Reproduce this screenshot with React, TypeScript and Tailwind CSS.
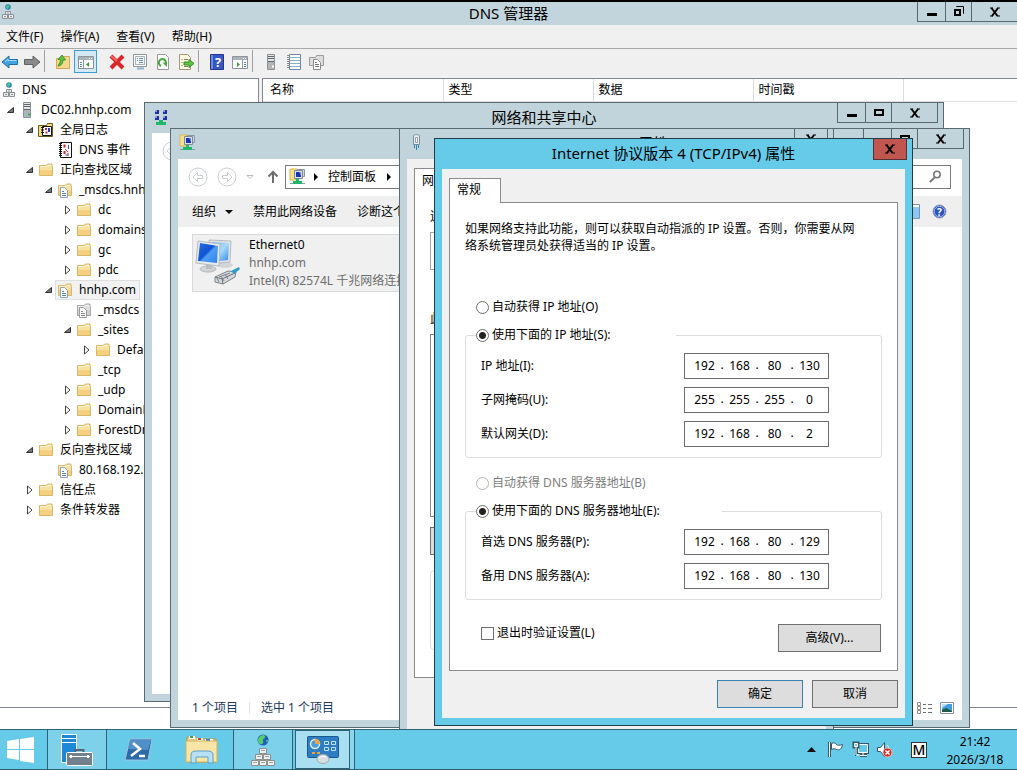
import type { ReactNode } from "react";
import clsx from "clsx";

type NodeIcon = "server" | "log" | "events" | "folder" | "zone" | "grayzone";

interface TreeItem {
  label: string;
  icon: NodeIcon;
  state?: "open" | "closed";
  selected?: boolean;
  children?: TreeItem[];
}

const TREE: TreeItem[] = [
  {
    label: "DC02.hnhp.com",
    icon: "server",
    state: "open",
    children: [
      {
        label: "全局日志",
        icon: "log",
        state: "open",
        children: [{ label: "DNS 事件", icon: "events" }],
      },
      {
        label: "正向查找区域",
        icon: "folder",
        state: "open",
        children: [
          {
            label: "_msdcs.hnhp.com",
            icon: "zone",
            state: "open",
            children: [
              { label: "dc", icon: "folder", state: "closed" },
              { label: "domains", icon: "folder", state: "closed" },
              { label: "gc", icon: "folder", state: "closed" },
              { label: "pdc", icon: "folder", state: "closed" },
            ],
          },
          {
            label: "hnhp.com",
            icon: "zone",
            state: "open",
            selected: true,
            children: [
              { label: "_msdcs", icon: "grayzone" },
              {
                label: "_sites",
                icon: "folder",
                state: "open",
                children: [
                  { label: "Default-First-Site-Name", icon: "folder", state: "closed" },
                ],
              },
              { label: "_tcp", icon: "folder" },
              { label: "_udp", icon: "folder", state: "closed" },
              { label: "DomainDnsZones", icon: "folder", state: "closed" },
              { label: "ForestDnsZones", icon: "folder", state: "closed" },
            ],
          },
        ],
      },
      {
        label: "反向查找区域",
        icon: "folder",
        state: "open",
        children: [{ label: "80.168.192.in-addr.arpa", icon: "zone" }],
      },
      { label: "信任点", icon: "folder", state: "closed" },
      { label: "条件转发器", icon: "folder", state: "closed" },
    ],
  },
];

const MENUS = ["文件(F)", "操作(A)", "查看(V)", "帮助(H)"];

const IP_FIELDS = [
  { id: "ip", label: "IP 地址(I):", value: "192.168.80.130" },
  { id: "mask", label: "子网掩码(U):", value: "255.255.255.0" },
  { id: "gateway", label: "默认网关(D):", value: "192.168.80.2" },
];

const DNS_FIELDS = [
  { id: "dns1", label: "首选 DNS 服务器(P):", value: "192.168.80.129" },
  { id: "dns2", label: "备用 DNS 服务器(A):", value: "192.168.80.130" },
];

export default function App() {
  return (
    <div className="flex h-screen flex-col overflow-hidden bg-white font-['Noto_Sans','Noto_Sans_CJK_SC',sans-serif] text-xs text-black">
      <div className="relative flex min-h-0 flex-1 flex-col overflow-hidden">
        <DnsManager />
        <SharingCenter />
        <NetworkConnections />
        <EthernetProperties />
        <Ipv4Dialog />
      </div>
      <Taskbar />
    </div>
  );
}

/* ---------- DNS manager ---------- */

function DnsManager() {
  return (
    <>
      <header className="relative flex h-[25px] shrink-0 items-center justify-center overflow-hidden border-t-2 border-black bg-[#c2d5dd] pb-[2px]">
        <span className="absolute top-[2px] left-0">
          <DnsGlyph />
        </span>
        <h1 className="text-[15px] leading-5">DNS 管理器</h1>
        <WindowButtons restore />
      </header>
      <nav className="flex h-6 shrink-0 items-center gap-[17px] border-b border-[#a9a9a9] bg-[#f0f0f0] pl-[6px]">
        {MENUS.map((m) => (
          <button key={m}>{m}</button>
        ))}
      </nav>
      <Toolbar />
      <div className="flex min-h-0 flex-1 gap-[3px] bg-[#f0f0f0]">
        <aside className="w-[259px] shrink-0 overflow-hidden border-t border-r border-b border-[#828790] bg-white pt-px">
          <div className="flex h-5 items-center gap-[5px] pl-px">
            <DnsGlyph />
            DNS
          </div>
          <div className="pl-[5px]">
            <Tree items={TREE} />
          </div>
        </aside>
        <main className="min-w-0 flex-1 border-t border-b border-l border-[#828790] bg-white">
          <table className="w-full table-fixed border-collapse text-left">
            <thead>
              <tr className="h-[22px] border-b border-[#e0e0e0]">
                <th className="w-[180px] border-r border-[#dcdcdc] pl-[7px] font-normal">名称</th>
                <th className="w-[150px] border-r border-[#dcdcdc] pl-[5px] font-normal">类型</th>
                <th className="w-[160px] border-r border-[#dcdcdc] pl-[5px] font-normal">数据</th>
                <th className="w-[150px] border-r border-[#dcdcdc] pl-[5px] font-normal">时间戳</th>
                <th />
              </tr>
            </thead>
          </table>
        </main>
      </div>
      <footer className="h-[21px] shrink-0 bg-white" />
    </>
  );
}

function Tree({ items, nested }: { items: TreeItem[]; nested?: boolean }) {
  return (
    <ul className={clsx(nested && "pl-[19px]")}>
      {items.map((item) => (
        <li key={item.label}>
          <div className="flex h-5 items-center gap-[2px] whitespace-nowrap">
            <span className="flex w-[10px] shrink-0 justify-center">
              {item.state && <Twisty open={item.state === "open"} />}
            </span>
            <span
              className={clsx(
                "flex h-5 items-center gap-[6px] border px-px",
                item.selected ? "border-[#dedede] bg-[#f2f2f2] pr-[3px]" : "border-transparent"
              )}
            >
              <TreeGlyph icon={item.icon} />
              {item.label}
            </span>
          </div>
          {item.children && <Tree items={item.children} nested />}
        </li>
      ))}
    </ul>
  );
}

function Twisty({ open }: { open: boolean }) {
  return (
    <svg width="9" height="10" viewBox="0 0 9 10">
      {open ? (
        <path d="M7.500 2.500v5h-6z" fill="#777" stroke="#333" />
      ) : (
        <path d="M2.500 1v8l4.500-4z" fill="#fff" stroke="#444" />
      )}
    </svg>
  );
}

function FolderShape({ gray }: { gray?: boolean }) {
  return (
    <>
      <path
        d="M1.500 3.500h6.500l1.500-1.500h4.500v2l.5.500v9h-13z"
        fill={gray ? "#dedede" : "#f8e2a2"}
        stroke={gray ? "#a6a6a6" : "#d8b768"}
      />
      <path d="M2 8h12v5H2z" fill={gray ? "#cfcfcf" : "#f4d080"} />
      <path d="M2 4.500h7l1-1" fill="none" stroke={gray ? "#f2f2f2" : "#fdf3cf"} />
      <path d="M10 3.500h3" stroke="#fffbe8" />
    </>
  );
}

function TreeGlyph({ icon }: { icon: NodeIcon }) {
  return (
    <svg width="16" height="16" viewBox="0 0 16 16" className="shrink-0">
      {icon === "folder" && <FolderShape />}
      {(icon === "zone" || icon === "grayzone") && (
        <>
          <FolderShape gray={icon === "grayzone"} />
          <path
            d="M3.500 5.500h4l3 3v7h-7z"
            fill="#fff"
            stroke={icon === "zone" ? "#8fa2b2" : "#9a9a9a"}
          />
          <path
            d="M5 9.500h2M5 11.500h4M5 13.500h4"
            stroke={icon === "zone" ? "#4f86bd" : "#888"}
          />
        </>
      )}
      {icon === "server" && <ServerShape />}
      {icon === "log" && (
        <>
          <path d="M.5 3.500h8l1-2h5v13h-14z" fill="#f3dc7a" stroke="#6c5d20" />
          <path d="M4.500 4.500h9v9h-9z" fill="#fff" stroke="#111" />
          <path d="M3 5.500h3M3 8h3M3 10.500h3" stroke="#111" />
          <path d="M8 6v2M7.500 10.500h2" stroke="#d2222c" strokeWidth="2" />
          <path d="M11 6v4" stroke="#2435b5" strokeWidth="2" />
        </>
      )}
      {icon === "events" && (
        <>
          <path d="M3.500.500h11v15h-11z" fill="#fff" stroke="#111" />
          <path d="M3.500 1v14" stroke="#111" strokeWidth="3" strokeDasharray="1 1" />
          <path d="M7.500 2.500v3M7.500 9v3" stroke="#d2222c" strokeWidth="2" />
          <path d="M8 7l3 3M11 11v3" stroke="#c23a5c" />
          <path d="M11.500 3v4M8.500 13h3" stroke="#4450b5" />
        </>
      )}
    </svg>
  );
}

function ServerShape({ gray }: { gray?: boolean }) {
  return (
    <>
      <path d="M4.500.500h7v15h-7z" fill={gray ? "#b4b4b4" : "#aab6bb"} stroke="#8a9296" />
      <path d="M5 1h6v6H5z" fill="#e3e6e7" />
      <path d="M5 2.500h6M5 4.500h6M5 7.500h6" stroke="#606668" />
      <path d="M9 12.500h2" stroke={gray ? "#fff" : "#37b24a"} strokeWidth="2" />
    </>
  );
}

function DnsGlyph() {
  return (
    <svg width="16" height="16" viewBox="0 0 16 16" className="shrink-0">
      <circle cx="8" cy="3" r="2.800" fill="#2c7fb8" />
      <path d="M6 2.500c1-2 3-2 3.500-.5S8 3 8 4.500 6 4 6 2.500z" fill="#4cc58a" />
      <path
        d="M5.500 7.500h5v3h-5zM2.500 10.500h5v4h-5zM8.500 10.500h5v4h-5z"
        fill="#e8eaec"
        stroke="#8b9297"
      />
      <path d="M6 12.500H4M12 12.500h-2M7 9h2" stroke="#999" />
    </svg>
  );
}

/* ---------- Toolbar ---------- */

function ToolButton({
  label,
  pressed,
  first,
  children,
}: {
  label: string;
  pressed?: boolean;
  first?: boolean;
  children: ReactNode;
}) {
  return (
    <button
      aria-label={label}
      className={clsx(
        "flex h-[23px] items-center justify-center",
        first ? "w-5" : "w-[23px]",
        pressed && "mr-2 border border-[#3c9fd6] bg-[#d5e9f5]"
      )}
    >
      <svg width="18" height="16" viewBox="0 0 18 16">
        {children}
      </svg>
    </button>
  );
}

function Separator() {
  return <span className="mr-[6px] ml-px h-[22px] w-px bg-[#a0a0a0]" />;
}

function PaneShape({ right }: { right?: boolean }) {
  return (
    <>
      <path d="M1.500 2.500h15v12h-15z" fill="#fff" stroke="#8c959c" />
      <path d="M2 3h14v3H2z" fill="#aab4bd" />
      <path d="M12 4.500h1M14 4.500h1" stroke="#fff" />
      {right ? (
        <>
          <path d="M11.500 6v8" stroke="#8c959c" />
          <path d="M13 8.500h2M13 10.500h2M13 12.500h2" stroke="#5087c5" />
          <path d="M6 8v5l3-2.500z" fill="#3a9a35" />
        </>
      ) : (
        <>
          <path d="M6.500 6v8" stroke="#8c959c" />
          <path d="M3 8.500h2M3 10.500h2M3 12.500h2" stroke="#5087c5" />
          <path d="M12 8v5l-3-2.500z" fill="#3a9a35" />
        </>
      )}
    </>
  );
}

function Toolbar() {
  return (
    <div className="flex h-[29px] shrink-0 items-start bg-[#f0f0f0] pt-px">
      <ToolButton label="后退" first>
        <path d="M1 8l7-6v3.500h8.500v5H8V14z" fill="#42a5e0" stroke="#1f6ea8" />
        <path d="M4 8l3-3v1.500h8.500" fill="none" stroke="#a5dbf6" />
      </ToolButton>
      <ToolButton label="前进">
        <path d="M17 8l-7-6v3.500H1.500v5H10V14z" fill="#8b8b8b" stroke="#616161" />
      </ToolButton>
      <Separator />
      <ToolButton label="向上一级">
        <path d="M2.500 4.500h6l1-2h6v12h-13z" fill="#f4d88c" stroke="#cfa95a" />
        <path d="M4 12c3 0 5-3 5-6h2.500L8 1 4 5.500h2.500C6.500 8 5 10 4 12z" fill="#5fc041" stroke="#3f9a2a" />
      </ToolButton>
      <ToolButton label="显示/隐藏控制台树" pressed>
        <PaneShape />
      </ToolButton>
      <ToolButton label="删除">
        <path d="M3 2l12 12M15 2L3 14" stroke="#d8262a" strokeWidth="4" />
        <path d="M3 2l6 5" stroke="#ef6a66" strokeWidth="2" />
      </ToolButton>
      <ToolButton label="属性">
        <path d="M2.500.500h13v12h-13z" fill="#fdfdfd" stroke="#8f979d" />
        <path d="M4.500 2.500h9v8h-9z" fill="#f3f6f8" stroke="#a8b2ba" />
        <path d="M6 4.500h1M8 4.500h4M6 6.500h1M8 6.500h4M8 8.500h4" stroke="#6f8ea9" />
        <path d="M6 14.500h7" stroke="#8fb3cf" strokeWidth="2" />
      </ToolButton>
      <ToolButton label="刷新">
        <path d="M3.500.500h8l3 3v12h-11z" fill="#fff" stroke="#9a9a9a" />
        <path d="M7 12a3.600 3.600 0 1 1 4.500-1.500" fill="none" stroke="#43a836" strokeWidth="2" />
        <path d="M8.500 8.500h4.500v4.500z" fill="#43a836" />
      </ToolButton>
      <ToolButton label="导出列表">
        <path d="M2.500.500h8l3 3v12h-11z" fill="#fdf8df" stroke="#a39b78" />
        <path d="M4.500 5.500h1M7 5.500h4M4.500 8.500h1M4.500 11.500h1M7 12.500h4" stroke="#857d60" />
        <path d="M7 8h5V5.500l5 4-5 4V11H7z" fill="#5cc244" stroke="#399227" />
      </ToolButton>
      <Separator />
      <ToolButton label="帮助">
        <path d="M2.500.500h13v15h-13z" fill="#3556c4" stroke="#22378c" />
        <path d="M3 1h2v14H3z" fill="#6d8be4" />
        <text x="10" y="13" fontSize="13" fontWeight="bold" textAnchor="middle" fill="#fff">
          ?
        </text>
      </ToolButton>
      <ToolButton label="显示/隐藏操作窗格">
        <PaneShape right />
      </ToolButton>
      <Separator />
      <ToolButton label="新建服务器">
        <g transform="translate(1)">
          <ServerShape gray />
        </g>
      </ToolButton>
      <ToolButton label="筛选器">
        <path d="M4.500.500h11v15h-11z" fill="#fff" stroke="#6f86b0" />
        <path d="M5 3.500h10M5 6.500h10M5 9.500h10M5 12.500h10" stroke="#87b2cf" />
        <path d="M3.500 1v14" stroke="#8d8d8d" strokeWidth="3" strokeDasharray="1 1" />
      </ToolButton>
      <ToolButton label="新建区域">
        <path d="M1.500 3.500h6l1-2h7v10h-14z" fill="#dedede" stroke="#9b9b9b" />
        <path d="M5.500 5.500h4l3 3v7h-7z" fill="#fff" stroke="#8b8b8b" />
        <path d="M7 8.500h2M7 10.500h4M7 12.500h4" stroke="#777" />
      </ToolButton>
    </div>
  );
}

/* ---------- Window chrome ---------- */

function CloseMark() {
  return (
    <svg width="12" height="10" viewBox="0 0 12 10">
      <path d="M2.500 1l6 8M9 1l-6 8" stroke="#000" strokeWidth="2" />
      <path d="M1 1h3M8 1h3M1 9h3M8 9h3" stroke="#000" />
    </svg>
  );
}

function WindowButtons({ restore }: { restore?: boolean }) {
  const cell = "flex h-5 items-center justify-center border-r border-b border-l border-[#59686f]";
  return (
    <div className={clsx("absolute top-0 flex", restore ? "-right-px" : "-right-[2px]")}>
      <button aria-label="最小化" className={clsx(cell, "w-[29px]")}>
        <svg width="12" height="10" viewBox="0 0 12 10">
          <path d="M1 6h10v3H1z" />
        </svg>
      </button>
      <button aria-label={restore ? "还原" : "最大化"} className={clsx(cell, "-ml-px w-[27px]")}>
        <svg width="12" height="11" viewBox="0 0 12 11">
          {restore ? (
            <>
              <path d="M3.500 1V.5h7v7H10" fill="none" stroke="#000" />
              <path d="M2 4h5v5H2z" fill="none" stroke="#000" strokeWidth="2" />
            </>
          ) : (
            <path d="M2 3h8v5H2z" fill="none" stroke="#000" strokeWidth="2" />
          )}
        </svg>
      </button>
      <button aria-label="关闭" className={clsx(cell, "-ml-px w-[47px]")}>
        <CloseMark />
      </button>
    </div>
  );
}

function Frame({
  label,
  title,
  icon,
  place,
  buttons,
  active,
  children,
}: {
  label: string;
  title?: string;
  icon?: ReactNode;
  place: string;
  buttons: ReactNode;
  active?: boolean;
  children?: ReactNode;
}) {
  return (
    <section
      aria-label={label}
      className={clsx(
        "absolute flex flex-col border px-[7px] pb-[7px]",
        active ? "border-[#1d3f4b] bg-[#66cbe8]" : "border-[#5b6970] bg-[#c2d4db]",
        place
      )}
    >
      <div className="relative flex h-[30px] shrink-0 items-center justify-center pb-[2px]">
        {icon && <span className="absolute top-[5px] left-px">{icon}</span>}
        {title && <h2 className="text-[15px] leading-5">{title}</h2>}
        {buttons}
      </div>
      {children}
    </section>
  );
}

/* ---------- Background windows ---------- */

function NavCircle({ forward, label }: { forward?: boolean; label: string }) {
  return (
    <button aria-label={label} className="shrink-0">
      <svg width="20" height="20" viewBox="0 0 20 20" fill="none" stroke="#cbced0">
        <circle cx="10" cy="10" r="9" />
        <path
          d={
            forward
              ? "M5.500 8.500h5v-3l4.500 4.500-4.500 4.500v-3h-5z"
              : "M14.500 8.500h-5v-3L5 10l4.500 4.500v-3h5z"
          }
        />
      </svg>
    </button>
  );
}

function SharingCenter() {
  return (
    <Frame
      label="网络和共享中心"
      title="网络和共享中心"
      place="top-[102px] left-[144px] h-[600px] w-[800px]"
      buttons={<WindowButtons />}
      icon={
        <svg width="16" height="18" viewBox="0 0 16 18">
          <path
            d="M2 2h4v4H2zM10 2h4v4h-4zM2 8h4v4H2zM10 8h4v4h-4z"
            fill="#1f2fa8"
          />
          <path d="M2 2h2v2H2zM10 2h2v2h-2zM2 8h2v2H2zM10 8h2v2h-2z" fill="#8d99dd" />
          <path d="M6 12h4v2h3v3H3v-3h3z" fill="#1fb86a" />
        </svg>
      }
    >
      <div className="flex-1 bg-white pt-2 pl-[10px]">
        <NavCircle label="后退" />
      </div>
    </Frame>
  );
}

function ConnectionsGlyph() {
  return (
    <svg width="17" height="17" viewBox="0 0 17 17" className="shrink-0">
      <path d="M1 1h7v11H1z" fill="#f7e28b" stroke="#d9b954" />
      <path d="M8.500 1.500h7v7h-7z" fill="#cfd6de" stroke="#8b96a3" />
      <path d="M5.500 2.500h8v8h-8z" fill="#dfe4ea" stroke="#7f8a98" />
      <path d="M7 4h5v5H7z" fill="#1b2fb5" />
      <path d="M10 4h2v4z" fill="#6b86ee" />
      <path d="M7 11h3v2h3v3H4v-3h3z" fill="#1fb86a" />
      <path d="M1 15.500h3M13 15.500h3" stroke="#8ca09a" />
    </svg>
  );
}

function Caret({ down }: { down?: boolean }) {
  return (
    <svg width="8" height="8" viewBox="0 0 8 8" className="shrink-0">
      <path d={down ? "M0 2h8L4 6z" : "M2 0v8l4-4z"} />
    </svg>
  );
}

function NetworkConnections() {
  return (
    <Frame
      label="网络连接"
      place="top-[128px] left-[170px] h-[600px] w-[800px]"
      buttons={<WindowButtons />}
      icon={<ConnectionsGlyph />}
    >
      <div className="flex flex-1 flex-col bg-white">
        <div className="flex h-[37px] shrink-0 items-center pr-[11px] pb-[2px] pl-[10px]">
          <NavCircle label="后退" />
          <span className="w-[9px]" />
          <NavCircle label="前进" forward />
          <svg width="10" height="8" viewBox="0 0 10 8" className="mx-2 shrink-0">
            <path d="M2 2.500h6L5 5.500z" fill="none" stroke="#b9bdc0" />
          </svg>
          <button aria-label="上移" className="mr-[6px] ml-1 shrink-0">
            <svg width="12" height="14" viewBox="0 0 12 14">
              <path d="M6 13V2M1.500 6.500L6 2l4.500 4.500" fill="none" stroke="#6d6d6d" strokeWidth="2" />
            </svg>
          </button>
          <div className="flex h-6 flex-1 items-center border border-[#7a7a7a] pl-[3px]">
            <ConnectionsGlyph />
            <span className="mr-2 ml-[6px]">
              <Caret />
            </span>
            控制面板
            <span className="ml-[9px]">
              <Caret />
            </span>
          </div>
          <div className="ml-2 flex h-6 w-40 items-center border border-[#7a7a7a] pr-2">
            <input aria-label="搜索" className="min-w-0 flex-1 outline-none" />
            <svg width="13" height="13" viewBox="0 0 13 13" fill="none" stroke="#777">
              <circle cx="8" cy="4.500" r="3.200" strokeWidth="1.500" />
              <path d="M5.500 7.500L1 12" strokeWidth="2" />
            </svg>
          </div>
        </div>
        <div className="flex h-[31px] shrink-0 items-center gap-5 bg-[#efefef] pr-[15px] pl-[14px]">
          <button className="flex items-center gap-[9px]">
            组织
            <Caret down />
          </button>
          <button>禁用此网络设备</button>
          <button>诊断这个连接</button>
          <button aria-label="显示预览窗格" className="ml-auto">
            <svg width="17" height="15" viewBox="0 0 17 15">
              <path d="M.5.500h16v14H.5z" fill="#fff" stroke="#7794b0" />
              <path d="M9 3h7v11H9z" fill="#8ec6f2" />
            </svg>
          </button>
          <button aria-label="获取帮助" className="-ml-2">
            <svg width="15" height="15" viewBox="0 0 15 15">
              <circle cx="7.500" cy="7.500" r="6.500" fill="#2a55c0" stroke="#8d97ad" />
              <circle cx="7.500" cy="7.500" r="5.300" fill="none" stroke="#a6bcf0" />
              <text x="7.500" y="11.500" fontSize="10" fontWeight="bold" textAnchor="middle" fill="#fff">
                ?
              </text>
            </svg>
          </button>
        </div>
        <div className="flex-1 pt-[7px] pl-[14px]">
          <div className="flex h-[58px] w-[260px] items-center gap-2 border border-[#d9d9d9] bg-[#f0f0f0] pl-[2px] whitespace-nowrap">
            <AdapterGlyph />
            <div className="leading-[18px]">
              <p>Ethernet0</p>
              <p className="text-[#6d6d6d]">hnhp.com</p>
              <p className="text-[#6d6d6d]">Intel(R) 82574L 千兆网络连接</p>
            </div>
          </div>
        </div>
        <div className="flex h-6 shrink-0 items-center pr-2 pl-[14px] text-[#1e395b]">
          <span className="mr-[11px]">1 个项目</span>
          <span className="h-3 w-px bg-[#e8e8e8]" />
          <span className="ml-[11px]">选中 1 个项目</span>
          <button aria-label="详细信息" className="mr-2 ml-auto">
            <svg width="15" height="13" viewBox="0 0 15 13" fill="none" stroke="#6b6f74">
              <path d="M.5.500h3v3h-3zM.5 4.500h3v3h-3zM.5 8.500h3v3h-3z" stroke="#96897f" />
              <path d="M6 2.500h3M11 2.500h4M6 6.500h3M11 6.500h4M6 10.500h3M11 10.500h4" />
            </svg>
          </button>
          <button aria-label="大图标">
            <svg width="14" height="12" viewBox="0 0 14 12">
              <path d="M.5.500h13v11H.5z" fill="#fff" stroke="#8294a5" />
              <path d="M2 2h10v8H2z" fill="#3f9fdc" />
              <path d="M2 2h6L2 6z" fill="#b5def5" />
              <path d="M2 8l4-2 6 3v1H2z" fill="#1f5a4d" />
            </svg>
          </button>
        </div>
      </div>
    </Frame>
  );
}

function AdapterGlyph() {
  return (
    <svg width="46" height="48" viewBox="0 0 46 48" className="shrink-0">
      <defs>
        <linearGradient id="screen" x1="0" y1="0" x2="1" y2="1">
          <stop offset="0" stopColor="#2a6ee0" />
          <stop offset="0.450" stopColor="#0f52d6" />
          <stop offset="0.550" stopColor="#4f9df5" />
          <stop offset="1" stopColor="#2b83ee" />
        </linearGradient>
        <linearGradient id="screen-back" x1="0" y1="0" x2="1" y2="1">
          <stop offset="0" stopColor="#6fb6f5" />
          <stop offset="0.500" stopColor="#a9d9fb" />
          <stop offset="1" stopColor="#2f86ea" />
        </linearGradient>
      </defs>
      <ellipse cx="30" cy="26" rx="8" ry="3" fill="#d3d6d9" />
      <path d="M14 1l22 1-1 21-18 2z" fill="#dfe3e6" stroke="#b4babf" />
      <path d="M16 3l18 1-1 17-16 2z" fill="url(#screen-back)" />
      <ellipse cx="13" cy="30" rx="8" ry="3" fill="#d0d4d7" stroke="#b5babd" />
      <path d="M11 24h6v6h-6z" fill="#b9bfc4" />
      <path d="M3 2l22 3-1 22-23-3z" fill="#e9ecee" stroke="#b4babf" />
      <path d="M5 4l18 3-1 17-19-2z" fill="url(#screen)" />
      <path d="M20 38l13-6 8 1-1 5-12 7-8-2z" fill="#d3d8dc" stroke="#7d858b" />
      <path d="M36 32l8-4 1 2-6 5z" fill="#2a9fc9" />
      <path d="M22 39l2 4M26 37l3 5M30 35l3 5M24 38l11-4" stroke="#7d858b" fill="none" />
      <path d="M20 38l7 2 1 5M27 40l13-6" stroke="#6d757b" fill="none" />
    </svg>
  );
}

function EthernetProperties() {
  return (
    <Frame
      label="Ethernet0 属性"
      title="Ethernet0 属性"
      place="top-[128px] left-[399px] h-[620px] w-[435px]"
      icon={
        <svg width="18" height="17" viewBox="0 0 18 17">
          <path d="M5.500 1.500c0-1 6-1 6 0v9h-6z" fill="#e9eef1" stroke="#7d8f9b" />
          <path d="M7.500 3.500h2v5h-2z" fill="#fff" stroke="#8fa0ab" />
          <path d="M6.500 11v3M8.500 11v5M10.500 11v3" stroke="#2a86b8" />
        </svg>
      }
      buttons={
        <button
          aria-label="关闭"
          className="absolute top-0 -right-[2px] flex h-5 w-[34px] items-center justify-center border-r border-b border-l border-[#59686f]"
        >
          <CloseMark />
        </button>
      }
    >
      <div className="flex-1 bg-[#f0f0f0] pt-[9px] pl-[7px]">
        <div className="h-[510px] overflow-hidden border border-[#8b8b8b] bg-white pl-[15px]">
          <p className="-ml-2 pt-[3px] leading-[18px]">网</p>
          <p className="mt-[18px] leading-[18px]">连</p>
          <div className="mt-[6px] h-[38px] border border-[#a5a5a5]" />
          <p className="mt-10 leading-[18px]">此</p>
          <div className="mt-[6px] h-[183px] border border-[#828790]" />
          <button
            aria-label="安装"
            className="mt-[10px] block h-7 w-24 border border-[#707070] bg-[#ddd]"
          />
          <div className="mt-[15px] h-20 rounded-sm border border-[#dcdcdc]" />
        </div>
      </div>
    </Frame>
  );
}

/* ---------- IPv4 dialog ---------- */

const RADIO =
  "size-[13px] shrink-0 appearance-none rounded-full border border-[#707070] bg-white checked:bg-[radial-gradient(circle,#222_3px,transparent_4px)] disabled:border-[#b4b4b4]";

function Choice({
  name,
  label,
  checked,
  disabled,
}: {
  name: string;
  label: string;
  checked?: boolean;
  disabled?: boolean;
}) {
  return (
    <label className={clsx("flex h-5 items-center gap-[3px]", disabled && "text-[#7d7d7d]")}>
      <input
        type="radio"
        name={name}
        defaultChecked={checked}
        disabled={disabled}
        className={RADIO}
      />
      {label}
    </label>
  );
}

function AddressField({ id, label, value }: { id: string; label: string; value: string }) {
  return (
    <div className="flex items-center pr-[42px] pl-[5px]">
      <label htmlFor={id} className="flex-1">
        {label}
      </label>
      <div className="flex h-[26px] w-[145px] items-center border border-[#6c6c6c] pb-[2px] pl-[5px]">
        {value.split(".").map((octet, i) => (
          <span key={i} className="flex items-center">
            {i > 0 && <span className="w-[6px] text-center">.</span>}
            <input
              id={i === 0 ? id : undefined}
              aria-label={i === 0 ? undefined : `${label} ${i + 1}`}
              defaultValue={octet}
              className="h-5 w-[29px] text-center outline-none"
            />
          </span>
        ))}
      </div>
    </div>
  );
}

const BUTTON = "h-7 border bg-[#dddddd]";

function Ipv4Dialog() {
  return (
    <Frame
      active
      label="Internet 协议版本 4 (TCP/IPv4) 属性"
      title="Internet 协议版本 4 (TCP/IPv4) 属性"
      place="top-[138px] left-[434px] w-[479px]"
      buttons={
        <button
          aria-label="关闭"
          className="absolute top-0 -right-[2px] flex h-[21px] w-[34px] items-center justify-center border-r border-b border-l border-[#5a2f31] bg-[#c1554f]"
        >
          <CloseMark />
        </button>
      }
    >
      <form className="bg-[#f0f0f0] pt-[9px] pr-[7px] pb-[10px] pl-[7px]">
        <button
          type="button"
          className="relative -mb-px block h-[25px] w-[52px] border border-b-0 border-[#8b8b8b] bg-white pb-[2px] pl-[7px] text-left"
        >
          常规
        </button>
        <div className="border border-[#8b8b8b] bg-white pt-[17px] pr-[15px] pb-[18px] pl-[15px]">
          <p className="pr-5 leading-[17px]">
            如果网络支持此功能，则可以获取自动指派的 IP 设置。否则，你需要从网络系统管理员处获得适当的 IP 设置。
          </p>
          <div className="mt-[43px] pl-[11px]">
            <Choice name="ip-mode" label="自动获得 IP 地址(O)" />
          </div>
          <fieldset className="mt-2 rounded-[3px] border border-[#dadddf] px-[10px] pt-2 pb-[10px]">
            <legend className="w-[200px]">
              <Choice name="ip-mode" label="使用下面的 IP 地址(S):" checked />
            </legend>
            <div className="flex flex-col gap-2">
              {IP_FIELDS.map((f) => (
                <AddressField key={f.id} {...f} />
              ))}
            </div>
          </fieldset>
          <div className="mt-[15px] pl-[11px]">
            <Choice name="dns-mode" label="自动获得 DNS 服务器地址(B)" disabled />
          </div>
          <fieldset className="mt-2 rounded-[3px] border border-[#dadddf] px-[10px] pt-2 pb-[10px]">
            <legend className="w-[246px]">
              <Choice name="dns-mode" label="使用下面的 DNS 服务器地址(E):" checked />
            </legend>
            <div className="flex flex-col gap-2">
              {DNS_FIELDS.map((f) => (
                <AddressField key={f.id} {...f} />
              ))}
            </div>
          </fieldset>
          <div className="mt-6 flex items-start justify-between pr-px pl-4">
            <label className="flex h-[18px] items-center gap-[3px]">
              <input
                type="checkbox"
                className="size-[13px] appearance-none border border-[#707070] bg-white checked:bg-[#444]"
              />
              退出时验证设置(L)
            </label>
            <button type="button" className={clsx(BUTTON, "w-[103px] border-[#707070]")}>
              高级(V)...
            </button>
          </div>
        </div>
        <div className="mt-[9px] flex justify-end gap-[9px]">
          <button type="button" className={clsx(BUTTON, "w-[86px] border-[#3c7fb1]")}>
            确定
          </button>
          <button type="button" className={clsx(BUTTON, "w-[86px] border-[#707070]")}>
            取消
          </button>
        </div>
      </form>
    </Frame>
  );
}

/* ---------- Taskbar ---------- */

function Taskbar() {
  const item = "flex h-full shrink-0 items-center justify-center";
  return (
    <footer className="flex h-[41px] shrink-0 items-center border-t border-b border-[#2f6172] bg-[#66cbe8]">
      <button aria-label="开始" className={clsx(item, "w-[47px] pr-[5px]")}>
        <svg width="28" height="26" viewBox="0 0 28 26" fill="#fff">
          <path d="M0 4l12-2v10H0zM13 2l14-2v12H13zM0 13h12v10L0 21zM13 13h14v13l-14-2z" />
        </svg>
      </button>
      <button aria-label="服务器管理器" className={clsx(item, "w-[60px] border-x border-[#2f6172] bg-[#7ed1ea]")}>
        <svg width="33" height="32" viewBox="0 0 33 32">
          <path d="M.5.500h15v28H.5z" fill="#1e87d8" stroke="#fff" />
          <path d="M1 4.500h14M1 8.500h14" stroke="#fff" />
          <path d="M14.500 18v-2h8v2" fill="none" stroke="#55646e" strokeWidth="2" />
          <rect x="5.500" y="18.500" width="26" height="13" rx="1" fill="#71828e" stroke="#fff" />
          <path d="M8 22.500h21" stroke="#fff" />
          <path d="M10 21v3M27 21v3" stroke="#fff" strokeWidth="2" />
        </svg>
      </button>
      <button aria-label="PowerShell" className={clsx(item, "w-[63px]")}>
        <svg width="30" height="24" viewBox="0 0 30 24">
          <path d="M6 1h22l-4 21H1z" fill="#2c6aa8" stroke="#9fc3df" />
          <path d="M6 2h21l-3 10L4 11z" fill="#4f90c9" />
          <path d="M9 5l7 6-9 7M15 18h6" fill="none" stroke="#fff" strokeWidth="2.500" />
        </svg>
      </button>
      <button aria-label="文件资源管理器" className={clsx(item, "w-[63px]")}>
        <svg width="34" height="30" viewBox="0 0 34 30">
          <path d="M2 2h9l2 2h18v23H2z" fill="#e9cf83" stroke="#b99745" />
          <path d="M4 1h6v3H4z" fill="#fff" />
          <path d="M5 1h3v2H5z" fill="#33a64c" />
          <path d="M12 3h6v3h-6z" fill="#fff" />
          <path d="M13 3h3v2h-3z" fill="#d64230" />
          <path d="M20 4h8v3h-8z" fill="#fff" />
          <path d="M21 4h4v2h-4z" fill="#3a7cc9" />
          <path d="M1 6h31v21H1z" fill="#f9e6a6" stroke="#d3b05c" />
          <path d="M6 28V20c0-3 2-4 5-4h12c3 0 5 1 5 4v8h-5v-6H11v6z" fill="#b8e0f4" stroke="#5d9fc7" />
        </svg>
      </button>
      <button aria-label="DNS" className={clsx(item, "w-[60px] border-x border-[#2f6172] bg-[#7ed1ea]")}>
        <svg width="26" height="32" viewBox="0 0 26 32">
          <circle cx="13" cy="6" r="5.500" fill="#1d5fc0" />
          <path d="M8 5c2-4 6-5 7-3s-3 3-2 5-1 4-3 3-2-3-2-5zM16 6l2 0-1 3z" fill="#57cf62" />
          <path
            d="M9.500 14.500h7v5h-7zM5.500 20.500h7v5h-7zM13.500 20.500h7v5h-7zM1.500 26.500h7v5h-7zM9.500 26.500h7v5h-7zM17.500 26.500h7v5h-7z"
            fill="#eef0f1"
            stroke="#8e8e8e"
          />
          <path d="M11 16.500h4M7 22.500h4M15 22.500h4M3 28.500h4M11 28.500h4M19 28.500h4" stroke="#a0a0a0" />
        </svg>
      </button>
      <button aria-label="控制面板" className={clsx(item, "ml-[2px] w-[55px] border border-[#2f6172] bg-[#a8e0f2]")}>
        <svg width="34" height="29" viewBox="0 0 34 29">
          <rect x="1.500" y="1.500" width="31" height="21" rx="1" fill="#2e7cc2" stroke="#1b568f" />
          <circle cx="9" cy="9" r="4.500" fill="#4f9bd9" stroke="#d5ecfb" strokeWidth="1.500" />
          <path d="M9 9V3.500a5.500 5.500 0 0 1 5 5.500z" fill="#f2a33a" />
          <path d="M18.500 6.500h4v3h-4zM25.500 6.500h4v3h-4zM18.500 12.500h4v3h-4zM25.500 12.500h4v3h-4z" fill="#2e7cc2" stroke="#bfe4fa" />
          <path d="M6 18h3M11 18h3" stroke="#f2a33a" strokeWidth="2" />
          <ellipse cx="17" cy="24" rx="6" ry="4.500" fill="#dadddf" stroke="#a2a7aa" />
          <path d="M13 23c2-2 5-2 7-1" stroke="#fff" fill="none" />
        </svg>
      </button>
      <span className="h-full w-[5px] border-r border-[#2f6172] bg-[#8bd6ed]" />

      <div className="ml-auto flex items-center">
        <button aria-label="显示隐藏的图标" className="mr-3">
          <svg width="9" height="5" viewBox="0 0 9 5">
            <path d="M0 5l4.500-5L9 5z" fill="#111" />
          </svg>
        </button>
        <svg width="16" height="17" viewBox="0 0 16 17" className="mr-2">
          <path d="M1.500 1v15" stroke="#35586a" strokeWidth="3" />
          <path d="M1.500 1v15" stroke="#fff" />
          <path d="M3.500 2.500c3-1.500 4 0 5 1s3 1 6 0c-1 5-3 6-6 5-2-1-3-1-5 0z" fill="#fff" stroke="#35586a" />
        </svg>
        <svg width="17" height="17" viewBox="0 0 17 17" className="mr-[7px]">
          <path d="M6.500 3.500h9v8h-9zM8 14.500h7M11 12v2" fill="none" stroke="#35586a" strokeWidth="3" />
          <path d="M6.500 3.500h9v8h-9zM8 14.500h7M11 12v2" fill="#66cbe8" stroke="#fff" />
          <path d="M1.500 1.500h5v5h-5zM4 7v8" fill="#66cbe8" stroke="#35586a" strokeWidth="2" />
          <path d="M2.500 2.500h3v3h-3zM4 6v8h3" fill="none" stroke="#fff" />
        </svg>
        <svg width="17" height="17" viewBox="0 0 17 17" className="mr-[18px]">
          <path d="M1.500 6.500h3l4-5v14l-4-5h-3z" fill="#fff" stroke="#35586a" />
          <path d="M11 4c1 1 1.500 2 1.500 3" stroke="#fff" fill="none" />
          <circle cx="11.500" cy="11.500" r="4.500" fill="#d3302c" stroke="#f4b6b2" />
          <path d="M9.500 9.500l4 4M13.500 9.500l-4 4" stroke="#fff" strokeWidth="1.500" />
        </svg>
        <span className="flex size-4 items-center justify-center border border-[#333] bg-white text-sm font-medium">
          M
        </span>
        <time className="mt-[2px] ml-4 w-[64px] text-center leading-[18px]">
          21:42
          <br />
          2026/3/18
        </time>
        <span className="w-[10px]" />
      </div>
    </footer>
  );
}
